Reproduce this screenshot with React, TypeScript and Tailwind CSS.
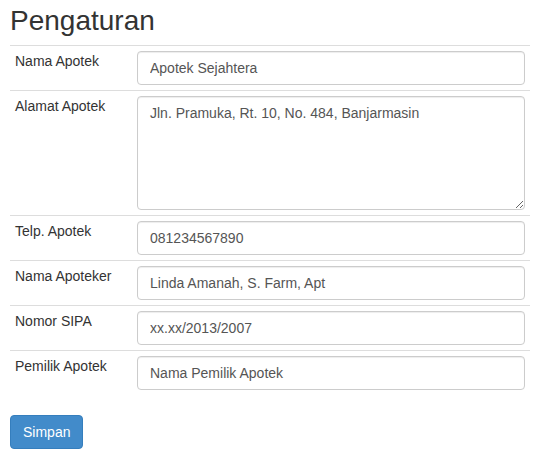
import React from 'react';

const fields = [
  { label: 'Nama Apotek', value: 'Apotek Sejahtera' },
  { label: 'Alamat Apotek', value: 'Jln. Pramuka, Rt. 10, No. 484, Banjarmasin', multiline: true },
  { label: 'Telp. Apotek', value: '081234567890' },
  { label: 'Nama Apoteker', value: 'Linda Amanah, S. Farm, Apt' },
  { label: 'Nomor SIPA', value: 'xx.xx/2013/2007' },
  { label: 'Pemilik Apotek', value: 'Nama Pemilik Apotek' },
];

const inputClass =
  'block w-full rounded-[4px] border border-[#ccc] bg-white px-3 text-sm text-[#555] shadow-[inset_0_1px_1px_rgba(0,0,0,0.075)] outline-none';

export default function App() {
  return (
    <div className="min-h-screen bg-white px-[10px] font-['Liberation_Sans',Arial,sans-serif] text-sm leading-5 text-[#333]">
      <h1 className="mt-0 mb-[3px] text-[28px] leading-[42px] font-normal">Pengaturan</h1>

      <table className="mb-5 w-[520px] border-collapse">
        <tbody>
          {fields.map((f) => (
            <tr key={f.label} className="border-t border-[#ddd]">
              <td className="w-[122px] p-[5px] align-top">{f.label}</td>
              <td className="p-[5px] align-top">
                {f.multiline ? (
                  <textarea
                    rows={5}
                    defaultValue={f.value}
                    className={`${inputClass} h-[114px] py-[6px] leading-5`}
                  />
                ) : (
                  <input type="text" defaultValue={f.value} className={`${inputClass} h-[34px] py-[6px]`} />
                )}
              </td>
            </tr>
          ))}
        </tbody>
      </table>

      <button className="rounded-[4px] border border-[#357ebd] bg-[#428bca] px-3 py-[6px] text-sm leading-5 text-white">
        Simpan
      </button>
    </div>
  );
}
